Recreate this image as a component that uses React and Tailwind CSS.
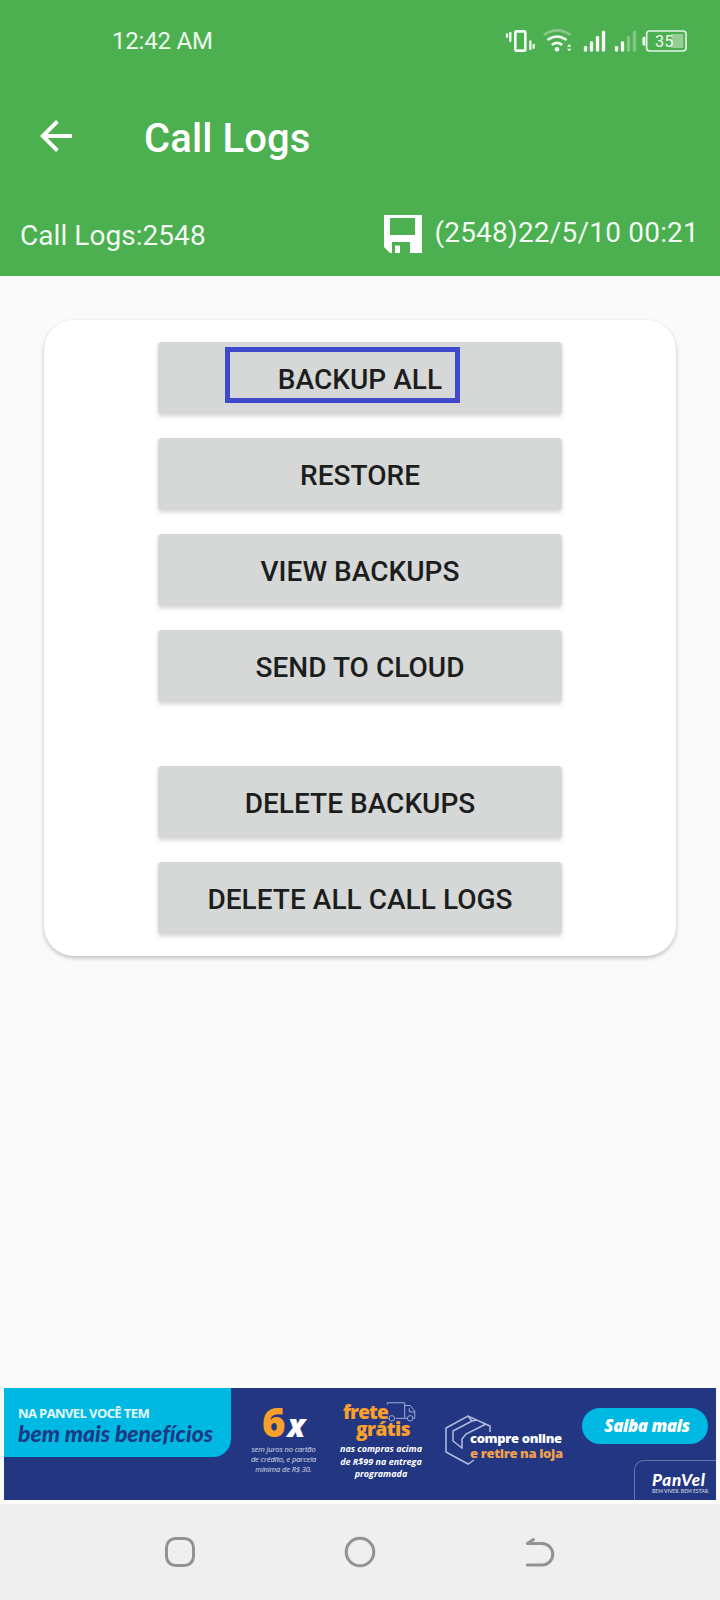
import { useState } from "react";

const mainActions = ["Backup all", "Restore", "View backups", "Send to cloud"];
const deleteActions = ["Delete backups", "Delete all call logs"];

function SignalIcon({ bars, className }) {
  return (
    <svg viewBox="309 48 72 78" className={`h-[26px] w-6 ${className}`}>
      {[105, 91, 75, 59].map((top, i) => (
        <rect
          key={top}
          x={311.5 + i * 18}
          y={top}
          width="10"
          height={122 - top}
          rx="4"
          fill="#fff"
          opacity={i < bars ? 0.95 : 0.3}
        />
      ))}
    </svg>
  );
}

function StatusBar() {
  return (
    <div className="flex h-20 items-center pr-[31px] pl-28">
      <span className="pt-0.5 text-2xl leading-none tracking-[-0.2px] text-white/90">
        12:42 AM
      </span>
      <div className="ml-auto flex items-center">
        {/* Vibrate */}
        <svg viewBox="75 48 93 78" className="h-[26px] w-[31px]">
          <g fill="none" stroke="#f1faf1" strokeWidth="7" strokeLinecap="round">
            <rect x="106" y="61" width="30" height="58" rx="3" strokeWidth="8" />
            <path d="M81 70v7M91 66v24M151 91v23M161 102v8" />
          </g>
        </svg>
        {/* Wifi */}
        <svg viewBox="186 48 90 78" className="ml-1.5 h-[26px] w-[30px]">
          <g fill="none" stroke="#f1faf1" strokeWidth="8" strokeLinecap="round">
            <path d="M194 70Q231 46 269 70" opacity="0.35" />
            <path d="M205 85Q231 68 257 85" />
            <path d="M218 100Q231 91 244 100" />
          </g>
          <circle cx="231" cy="115" r="7" fill="#f1faf1" />
          <path d="M261 107l6.500-8 6.500 8zM261 113l6.500 8 6.500-8z" fill="#f1faf1" />
        </svg>
        <SignalIcon bars={4} className="ml-[11px]" />
        <SignalIcon bars={2} className="ml-[7px]" />
        {/* Battery */}
        <svg viewBox="483 48 144 78" className="ml-[3px] h-[26px] w-12">
          <path d="M496 77h-3q-6 0-6 6v15q0 6 6 6h3z" fill="#f1faf1" />
          <rect x="574" y="69" width="36" height="42" fill="#fff" opacity="0.4" />
          <rect
            x="500"
            y="60"
            width="118"
            height="60"
            rx="9"
            fill="none"
            stroke="#e3f4e3"
            strokeWidth="5"
          />
          <text x="525" y="107" fontSize="49" fill="#f1faf1">
            35
          </text>
        </svg>
      </div>
    </div>
  );
}

function Header() {
  return (
    <header className="flex h-[276px] flex-col bg-[#4caf50]">
      <StatusBar />
      <div className="flex h-28 items-center pl-8">
        <button aria-label="Back">
          <svg viewBox="0 0 24 24" className="size-12 fill-white">
            <path d="M20 11H7.830l5.590-5.590L12 4l-8 8 8 8 1.410-1.410L7.830 13H20z" />
          </svg>
        </button>
        <h1 className="ml-16 pt-1.5 text-[40px] leading-none font-medium tracking-[0.1px] text-white">
          Call Logs
        </h1>
      </div>
      <div className="flex h-[84px] items-center pr-[21px] pl-5 text-[28px] leading-none text-white/95">
        <span className="pt-1 tracking-[0.05px]">Call Logs:2548</span>
        <svg viewBox="0 0 38 38" className="ml-auto size-[38px]">
          <path
            fillRule="evenodd"
            fill="#fff"
            d="M0 0H38V38H26V27H8V38H6L0 32ZM6 3V20H31V3ZM11 30.500H16V38H11Z"
          />
        </svg>
        <span className="-mt-0.5 ml-3 tracking-[0.2px]">(2548)22/5/10 00:21</span>
      </div>
    </header>
  );
}

function ActionButton({ label, selected, onClick }) {
  return (
    <button
      onClick={onClick}
      className="relative h-[72px] w-[404px] rounded-[4px] bg-[#d6d8d7] pt-[3px] text-[28px] leading-none font-medium tracking-[0.03px] text-[#1c1d1d] uppercase shadow-[0_2px_4px_rgba(0,0,0,0.18)]"
    >
      {label}
      {selected && (
        <span className="absolute top-[5px] left-[67px] h-14 w-[235px] border-[5px] border-[#4048cc]" />
      )}
    </button>
  );
}

function AdBanner() {
  return (
    <div className="mx-1 flex h-28 overflow-hidden bg-[#233682] font-['Open_Sans',sans-serif] text-white">
      <div className="h-[69px] w-[227px] rounded-br-[18px] bg-[#00b9e2] pt-[17px] pl-3.5">
        <p className="text-[13px] leading-[16px] font-bold tracking-[-0.6px] whitespace-nowrap text-white/90">
          NA PANVEL VOCÊ TEM
        </p>
        <p className="font-[Lato,sans-serif] text-[23px] leading-[25px] font-black tracking-[-0.05px] whitespace-nowrap text-[#1b3a86] italic">
          bem mais benefícios
        </p>
      </div>

      <div className="ml-4 flex w-[73px] flex-col items-center pt-[14px]">
        <div className="flex h-10 items-baseline leading-10 font-extrabold">
          <span className="text-[40px] text-[#f9a02b]">6</span>
          <span className="ml-0.5 text-[31px] italic">x</span>
        </div>
        <p className="pt-0.5 text-center text-[7.500px] leading-[10px] tracking-[-0.1px] whitespace-nowrap text-white/80 italic">
          sem juros no cartão
          <br />
          de crédito, e parcela
          <br />
          mínima de R$ 30.
        </p>
      </div>

      <div className="ml-4 flex w-[90px] flex-col items-center pt-3">
        <div className="flex w-[76px] text-[#f9a02b]">
          <span className="w-[45px] pt-0.5 text-[19px] leading-[20px] font-extrabold tracking-[-0.8px]">
            frete
          </span>
          <svg
            viewBox="0 0 34 24"
            className="-ml-1 h-[22px] w-[34px] flex-none fill-none stroke-[#a9b4dc]"
          >
            <path d="M2 5V3H21V20H11M4 20H2M21 6H27L32 12V20H30M21 20H24M26 9V13H32" />
            <circle cx="7" cy="20" r="3" />
            <circle cx="27" cy="20" r="3" />
          </svg>
        </div>
        <p className="-mt-1 pl-1 text-[19px] leading-[22px] font-extrabold tracking-[-0.5px] text-[#f9a02b]">
          grátis
        </p>
        <p className="mt-[3px] text-center text-[9px] leading-[12.500px] font-bold whitespace-nowrap italic">
          nas compras acima
          <br />
          de R$99 na entrega
          <br />
          programada
        </p>
      </div>

      <div className="ml-[18px] flex w-[124px] pt-[26px]">
        <svg
          viewBox="0 0 48 52"
          className="h-[52px] w-12 flex-none fill-none stroke-[#b4bde0] stroke-[1.500]"
        >
          <path d="M46 18V12L24 2L2 14V38L24 50L30 46" />
          <path d="M24 2L28 7L9 17V27L18 34V25L22 20L42 10M28 7L33 6" />
        </svg>
        <p className="-ml-[22px] pt-[17px] text-[13px] leading-[15px] font-extrabold tracking-[-0.35px] whitespace-nowrap">
          compre online
          <br />
          <span className="text-[#f0a04b]">e retire na loja</span>
        </p>
      </div>

      <div className="ml-auto flex w-[131px] flex-col items-end justify-between pt-5">
        <button className="mr-2 h-9 w-[126px] flex-none rounded-full bg-[#00b9e2] pb-0.5 pl-1 text-[17px] leading-none font-extrabold tracking-[-0.5px] italic">
          Saiba mais
        </button>
        <div className="h-10 w-[82px] rounded-tl-[10px] border-t border-l border-[#6674ad] pt-[11px] pl-[17px] font-[Lato,sans-serif]">
          <p className="text-[17px] leading-[16px] font-black tracking-[0.8px] italic">
            PanVel
          </p>
          <p className="text-[5px] leading-[6px] font-bold whitespace-nowrap text-white/70">
            BEM VIVER. BEM ESTAR.
          </p>
        </div>
      </div>
    </div>
  );
}

function NavBar() {
  return (
    <nav className="mt-1 flex h-24 items-center justify-center gap-[148px] bg-[#efefef]">
      <svg viewBox="0 0 32 32" className="size-8 fill-none stroke-[#929292] stroke-3">
        <rect x="2.500" y="2.500" width="27" height="27" rx="9" />
      </svg>
      <svg viewBox="0 0 32 32" className="size-8 fill-none stroke-[#929292] stroke-3">
        <circle cx="16" cy="16" r="13.800" />
      </svg>
      <svg
        viewBox="0 0 32 32"
        className="size-8 fill-none stroke-[#929292] stroke-3 [stroke-linecap:round] [stroke-linejoin:round]"
      >
        <path d="M9.500 3.500L3.300 7.500H18A10.700 10.700 0 0 1 18 29H3.300" />
      </svg>
    </nav>
  );
}

function App() {
  const [selected, setSelected] = useState("Backup all");

  const renderButton = (label) => (
    <ActionButton
      key={label}
      label={label}
      selected={selected === label}
      onClick={() => setSelected(label)}
    />
  );

  return (
    <div className="flex h-[1600px] w-[720px] flex-col bg-[#fafafa] font-[Roboto,sans-serif]">
      <Header />
      <main className="flex-1 px-11 pt-11">
        <div className="flex h-[636px] flex-col items-center rounded-[30px] bg-white pt-[22px] shadow-[0_2px_4px_rgba(0,0,0,0.24)]">
          <div className="flex flex-col gap-6">{mainActions.map(renderButton)}</div>
          <div className="mt-16 flex flex-col gap-6">{deleteActions.map(renderButton)}</div>
        </div>
      </main>
      <AdBanner />
      <NavBar />
    </div>
  );
}

export default App;
